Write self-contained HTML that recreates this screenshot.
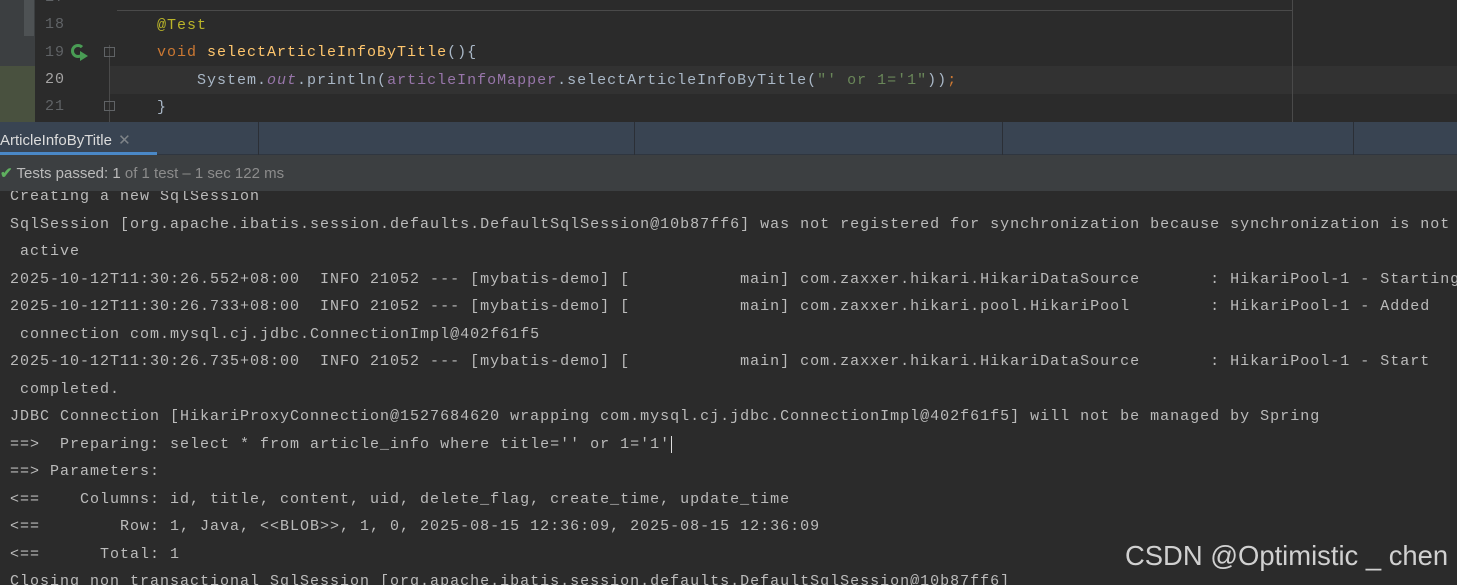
<!DOCTYPE html>
<html><head><meta charset="utf-8"><style>
*{margin:0;padding:0;box-sizing:border-box}
body{width:1457px;height:585px;overflow:hidden;background:#2b2b2b;position:relative;font-family:"Liberation Mono",monospace}
.abs{position:absolute}
.mono{font-family:"Liberation Mono",monospace;font-size:15px;letter-spacing:1px;white-space:pre}
</style></head><body>
<!-- editor -->
<div class="abs" style="left:0;top:0;width:35px;height:122px;background:#3c3f41"></div>
<div class="abs" style="left:24px;top:0;width:10px;height:36px;background:#4e5254"></div>
<div class="abs" style="left:0;top:66px;width:35px;height:56px;background:#49513f"></div>
<div class="abs" style="left:110px;top:66px;width:1347px;height:28px;background:#323232"></div>
<div class="abs" style="left:117px;top:10px;width:1175px;height:1px;background:#4a4a4a"></div>
<div class="abs" style="left:1292px;top:0;width:1px;height:122px;background:#4a4a4a"></div>
<div class="abs" style="left:109px;top:45px;width:1px;height:77px;background:#4a4a4a"></div>
<div class="abs mono" style="left:45px;color:#606366;line-height:27.3px;top:-16px">17
18
19
<span style="color:#a4a3a3">20</span>
21</div>
<div class="abs" style="left:71px;top:44px;width:14px;height:14px;border:3px solid #499c54;border-radius:50%;border-right-color:transparent"></div>
<div class="abs" style="left:80px;top:51px;width:0;height:0;border-left:8px solid #499c54;border-top:5px solid transparent;border-bottom:5px solid transparent"></div>
<div class="abs" style="left:104px;top:47px;width:11px;height:10px;border:1px solid #606366"></div>
<div class="abs" style="left:104px;top:101px;width:11px;height:10px;border:1px solid #606366"></div>
<div class="abs mono" style="left:157px;top:12px;color:#a9b7c6;line-height:27.3px"><span style="color:#bbb529">@Test</span>
<span style="color:#cc7832">void</span> <span style="color:#ffc66d">selectArticleInfoByTitle</span>(){
    System.<i style="color:#9876aa">out</i>.println(<span style="color:#9876aa">articleInfoMapper</span>.selectArticleInfoByTitle(<span style="color:#6a8759">"' or 1='1"</span>))<span style="color:#cc7832">;</span>
}</div>
<!-- tab bar -->
<div class="abs" style="left:0;top:122px;width:1457px;height:33px;background:#394452;border-bottom:1px solid #2f3640"></div>
<div class="abs" style="left:258px;top:122px;width:1px;height:33px;background:#2b2f36"></div>
<div class="abs" style="left:634px;top:122px;width:1px;height:33px;background:#2b2f36"></div>
<div class="abs" style="left:1002px;top:122px;width:1px;height:33px;background:#2b2f36"></div>
<div class="abs" style="left:1353px;top:122px;width:1px;height:33px;background:#2b2f36"></div>
<div class="abs" style="left:0;top:129px;font:15px 'Liberation Sans',sans-serif;color:#dcdcdc;line-height:24px">ArticleInfoByTitle <span style="color:#7f8489;margin-left:2px">✕</span></div>
<div class="abs" style="left:0;top:152px;width:157px;height:3px;background:#4a88c7"></div>
<!-- status -->
<div class="abs" style="left:0;top:155px;width:1457px;height:36px;background:#3c3f41"></div>
<div class="abs" style="left:0;top:163px;font:15px 'Liberation Sans',sans-serif;color:#bbbbbb;line-height:22px"><span style="color:#5fb05f;font-weight:bold">✔</span> Tests passed: 1 <span style="color:#8c8c8c">of 1 test – 1 sec 122 ms</span></div>
<!-- console -->
<div class="abs" style="left:0;top:191px;width:1457px;height:394px;overflow:hidden">
<div class="abs mono" style="left:10px;top:-8px;color:#bbbbbb;line-height:27.5px">Creating a new SqlSession
SqlSession [org.apache.ibatis.session.defaults.DefaultSqlSession@10b87ff6] was not registered for synchronization because synchronization is not
 active
2025-10-12T11:30:26.552+08:00  INFO 21052 --- [mybatis-demo] [           main] com.zaxxer.hikari.HikariDataSource       : HikariPool-1 - Starting
2025-10-12T11:30:26.733+08:00  INFO 21052 --- [mybatis-demo] [           main] com.zaxxer.hikari.pool.HikariPool        : HikariPool-1 - Added
 connection com.mysql.cj.jdbc.ConnectionImpl@402f61f5
2025-10-12T11:30:26.735+08:00  INFO 21052 --- [mybatis-demo] [           main] com.zaxxer.hikari.HikariDataSource       : HikariPool-1 - Start
 completed.
JDBC Connection [HikariProxyConnection@1527684620 wrapping com.mysql.cj.jdbc.ConnectionImpl@402f61f5] will not be managed by Spring
==>  Preparing: select * from article_info where title='' or 1='1'<span style="border-left:1px solid #ddd;margin-left:1px"></span>
==> Parameters: 
&lt;==    Columns: id, title, content, uid, delete_flag, create_time, update_time
&lt;==        Row: 1, Java, &lt;&lt;BLOB&gt;&gt;, 1, 0, 2025-08-15 12:36:09, 2025-08-15 12:36:09
&lt;==      Total: 1
Closing non transactional SqlSession [org.apache.ibatis.session.defaults.DefaultSqlSession@10b87ff6]</div>
</div>
<div class="abs" style="left:1125px;top:540px;font:27.4px 'Liberation Sans',sans-serif;color:#d0d0d0;white-space:pre">CSDN @Optimistic _ chen</div>
</body></html>
